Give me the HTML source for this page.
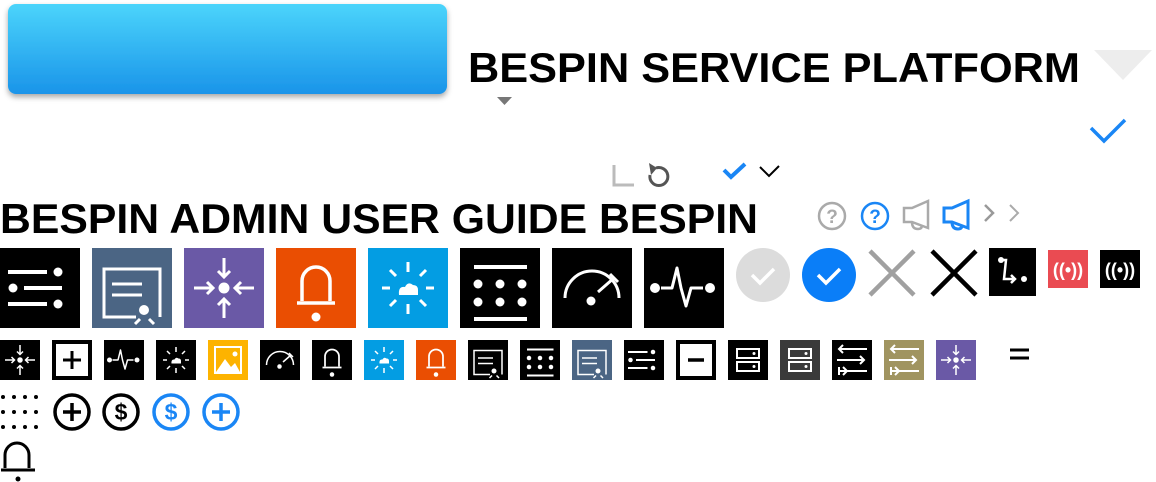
<!DOCTYPE html>
<html><head><meta charset="utf-8"><style>
html,body{margin:0;padding:0;background:#fff;width:1156px;height:482px;overflow:hidden}
svg{display:block}
text{font-family:"Liberation Sans",sans-serif;font-weight:bold}
</style></head><body>
<svg width="1156" height="482" viewBox="0 0 1156 482" xmlns="http://www.w3.org/2000/svg">
<defs>
<linearGradient id="bg" x1="0" y1="0" x2="0" y2="1"><stop offset="0" stop-color="#4bd4fb"/><stop offset="1" stop-color="#1a94e9"/></linearGradient>
<filter id="sh" x="-10%" y="-20%" width="120%" height="150%"><feDropShadow dx="0" dy="3" stdDeviation="3" flood-color="#000" flood-opacity="0.35"/></filter>
<symbol id="sliders" viewBox="0 0 80 80"><g stroke="#fff" stroke-width="4" fill="#fff"><line x1="8" y1="24" x2="47" y2="24"/><circle cx="58" cy="24" r="4.5" stroke="none"/><circle cx="13" cy="40" r="4.5" stroke="none"/><line x1="24" y1="40" x2="62" y2="40"/><line x1="8" y1="56" x2="47" y2="56"/><circle cx="58" cy="56" r="4.5" stroke="none"/></g></symbol>
<symbol id="pres" viewBox="0 0 80 80"><g stroke="#fff" stroke-width="3" fill="none"><path d="M44 69 H12 V21 H68 V69"/><line x1="20" y1="36" x2="50" y2="36"/><line x1="20" y1="47" x2="50" y2="47"/><line x1="48" y1="71" x2="43" y2="76"/><line x1="57" y1="71" x2="62" y2="76"/></g><circle cx="52" cy="62" r="5" fill="#fff"/></symbol>
<symbol id="arrin" viewBox="0 0 80 80"><g stroke="#fff" stroke-width="3" fill="none"><path d="M40 10 V29 M34 23 L40 29 L46 23"/><path d="M40 70 V51 M34 57 L40 51 L46 57"/><path d="M10 40 H29 M23 34 L29 40 L23 46"/><path d="M70 40 H51 M57 34 L51 40 L57 46"/></g><circle cx="40" cy="40" r="5.5" fill="#fff"/></symbol>
<symbol id="bell" viewBox="0 0 80 80"><g stroke="#fff" stroke-width="3.5" fill="none"><path d="M26 53 V33 A14 14 0 0 1 54 33 V53"/><line x1="21" y1="55" x2="59" y2="55"/></g><circle cx="40" cy="69" r="4.5" fill="#fff"/></symbol>
<symbol id="sun" viewBox="0 0 80 80"><g stroke="#fff" stroke-width="3" fill="none"><path d="M40 14 V24 M40 56 V66 M14 40 H22 M58 40 H66 M22 22 L28 28 M58 22 L52 28 M22 58 L28 52 M58 58 L52 52"/></g><path d="M31 47 Q30 38 37 39 Q40 33 45 37 Q50 37 50 42 V47 Z" fill="#fff"/></symbol>
<symbol id="grid" viewBox="0 0 80 80"><g fill="#fff"><rect x="14" y="17" width="53" height="4"/><rect x="14" y="69" width="53" height="4"/><circle cx="18" cy="36" r="4.5"/><circle cx="40" cy="36" r="4.5"/><circle cx="62" cy="36" r="4.5"/><circle cx="18" cy="54" r="4.5"/><circle cx="40" cy="54" r="4.5"/><circle cx="62" cy="54" r="4.5"/></g></symbol>
<symbol id="gauge" viewBox="0 0 80 80"><g stroke="#fff" stroke-width="3" fill="none"><path d="M13 50 A27 27 0 0 1 67 50"/><path d="M46 44 L62 30 M58 26 L66 34"/></g><circle cx="39" cy="53" r="4.5" fill="#fff"/></symbol>
<symbol id="pulse" viewBox="0 0 80 80"><g stroke="#fff" stroke-width="3" fill="none" stroke-linejoin="round"><path d="M17 40 H28 L33 20 L37 40 L42 58 L47 40 H59"/></g><circle cx="11" cy="40" r="5" fill="#fff"/><circle cx="66" cy="40" r="5" fill="#fff"/></symbol>
<symbol id="plus" viewBox="0 0 80 80"><rect x="8" y="8" width="64" height="64" fill="#fff"/><path d="M40 22 V58 M22 40 H58" stroke="#000" stroke-width="6"/></symbol>
<symbol id="minus" viewBox="0 0 80 80"><rect x="8" y="8" width="64" height="64" fill="#fff"/><path d="M24 40 H56" stroke="#000" stroke-width="7"/></symbol>
<symbol id="img" viewBox="0 0 80 80"><rect x="14" y="14" width="52" height="52" fill="none" stroke="#fff" stroke-width="4"/><path d="M16 64 L34 38 L46 54 L54 46 L64 64 Z" fill="#fff"/><circle cx="54" cy="28" r="5" fill="#fff"/></symbol>
<symbol id="server" viewBox="0 0 80 80"><g stroke="#fff" stroke-width="4" fill="none"><rect x="18" y="18" width="44" height="18"/><rect x="18" y="44" width="44" height="18"/></g><circle cx="52" cy="27" r="3" fill="#fff"/><circle cx="52" cy="53" r="3" fill="#fff"/></symbol>
<symbol id="xfer" viewBox="0 0 80 80"><g stroke="#fff" stroke-width="4" fill="none"><path d="M14 18 H70 M22 10 L14 18 L22 26"/><path d="M10 40 H64 M56 32 L64 40 L56 48"/><path d="M14 62 H70 M14 54 V70 M22 54 L30 62 L22 70"/></g></symbol>
</defs>

<rect x="8" y="4" width="439" height="90" rx="8" fill="url(#bg)" filter="url(#sh)"/>
<text x="468" y="82" font-size="41.5" textLength="612" lengthAdjust="spacingAndGlyphs" fill="#000">BESPIN SERVICE PLATFORM</text>
<path d="M1094 50 H1152 L1123 80 Z" fill="#ededed"/>
<path d="M497 97 H512 L504.5 105 Z" fill="#777"/>
<path d="M1091 128 L1104 141 L1125 120" stroke="#1a86f5" stroke-width="3.5" fill="none"/>

<path d="M614 165 V185 H634" stroke="#bbb" stroke-width="3" fill="none"/>
<path d="M656 168 A9 9 0 1 1 650 175" stroke="#555" stroke-width="3" fill="none"/><path d="M649 163 L657 168 L651 175Z" fill="#555"/>
<path d="M724 170 L731 177 L745 164" stroke="#1a86f5" stroke-width="4" fill="none"/>
<path d="M760 167 L769 176 L779 166" stroke="#000" stroke-width="2" fill="none"/>

<text x="0" y="233" font-size="41.5" textLength="758" lengthAdjust="spacingAndGlyphs" fill="#000">BESPIN ADMIN USER GUIDE BESPIN</text>
<circle cx="832" cy="216" r="13" fill="none" stroke="#aaa" stroke-width="2.5"/><text x="832" y="223" font-size="19" text-anchor="middle" fill="#aaa">?</text>
<circle cx="875" cy="216" r="13" fill="none" stroke="#1a86f5" stroke-width="2.5"/><text x="875" y="223" font-size="19" text-anchor="middle" fill="#1a86f5">?</text>
<path d="M904 208 H912 L928 201 V228 L912 222 H904 Z M912 222 Q912 229 918 229 Q922 229 922 225" fill="none" stroke="#aaa" stroke-width="2.5"/>
<path d="M944 208 H952 L968 201 V228 L952 222 H944 Z M952 222 Q952 229 958 229 Q962 229 962 225" fill="none" stroke="#1a86f5" stroke-width="3"/>
<path d="M985 205 L993 213 L985 221" stroke="#999" stroke-width="2.5" fill="none"/>
<path d="M1010 205 L1018 213 L1010 221" stroke="#aaa" stroke-width="2" fill="none"/>

<rect x="0" y="248" width="80" height="80" fill="#000"/><use href="#sliders" x="0" y="248" width="80" height="80"/>
<rect x="92" y="248" width="80" height="80" fill="#4b6584"/><use href="#pres" x="92" y="248" width="80" height="80"/>
<rect x="184" y="248" width="80" height="80" fill="#6a59a6"/><use href="#arrin" x="184" y="248" width="80" height="80"/>
<rect x="276" y="248" width="80" height="80" fill="#ea4e02"/><use href="#bell" x="276" y="248" width="80" height="80"/>
<rect x="368" y="248" width="80" height="80" fill="#039de3"/><use href="#sun" x="368" y="248" width="80" height="80"/>
<rect x="460" y="248" width="80" height="80" fill="#000"/><use href="#grid" x="460" y="248" width="80" height="80"/>
<rect x="552" y="248" width="80" height="80" fill="#000"/><use href="#gauge" x="552" y="248" width="80" height="80"/>
<rect x="644" y="248" width="80" height="80" fill="#000"/><use href="#pulse" x="644" y="248" width="80" height="80"/>
<circle cx="763" cy="275" r="27" fill="#dcdcdc"/><path d="M752 275 L760 283 L774 269" stroke="#fff" stroke-width="3.5" fill="none"/>
<circle cx="829" cy="275" r="27" fill="#0a7ef8"/><path d="M818 275 L826 283 L840 269" stroke="#fff" stroke-width="3.5" fill="none"/>
<path d="M870 251 L914 295 M914 251 L870 295" stroke="#a0a0a0" stroke-width="4.5"/>
<path d="M932 251 L976 295 M976 251 L932 295" stroke="#000" stroke-width="4.5"/>
<rect x="989" y="248" width="47" height="48" fill="#000"/><path d="M1000 260 H1006 L1004 279 H1014 M1011 275 L1015 279 L1011 283" stroke="#fff" stroke-width="2.5" fill="none"/><circle cx="1001" cy="260" r="3" fill="#fff"/><circle cx="1024" cy="279" r="3" fill="#fff"/>
<rect x="1048" y="250" width="40" height="38" fill="#ea4b52"/><text x="1068" y="276" font-size="18" text-anchor="middle" fill="#fff">((•))</text>
<rect x="1100" y="250" width="40" height="38" fill="#000"/><text x="1120" y="276" font-size="18" text-anchor="middle" fill="#fff">((•))</text>

<rect x="0" y="340" width="40" height="40" fill="#000"/><use href="#arrin" x="0" y="340" width="40" height="40"/>
<rect x="52" y="340" width="40" height="40" fill="#000"/><use href="#plus" x="52" y="340" width="40" height="40"/>
<rect x="104" y="340" width="40" height="40" fill="#000"/><use href="#pulse" x="104" y="340" width="40" height="40"/>
<rect x="156" y="340" width="40" height="40" fill="#000"/><use href="#sun" x="156" y="340" width="40" height="40"/>
<rect x="208" y="340" width="40" height="40" fill="#fdb300"/><use href="#img" x="208" y="340" width="40" height="40"/>
<rect x="260" y="340" width="40" height="40" fill="#000"/><use href="#gauge" x="260" y="340" width="40" height="40"/>
<rect x="312" y="340" width="40" height="40" fill="#000"/><use href="#bell" x="312" y="340" width="40" height="40"/>
<rect x="364" y="340" width="40" height="40" fill="#039de3"/><use href="#sun" x="364" y="340" width="40" height="40"/>
<rect x="416" y="340" width="40" height="40" fill="#ea4e02"/><use href="#bell" x="416" y="340" width="40" height="40"/>
<rect x="468" y="340" width="40" height="40" fill="#000"/><use href="#pres" x="468" y="340" width="40" height="40"/>
<rect x="520" y="340" width="40" height="40" fill="#000"/><use href="#grid" x="520" y="340" width="40" height="40"/>
<rect x="572" y="340" width="40" height="40" fill="#4b6584"/><use href="#pres" x="572" y="340" width="40" height="40"/>
<rect x="624" y="340" width="40" height="40" fill="#000"/><use href="#sliders" x="624" y="340" width="40" height="40"/>
<rect x="676" y="340" width="40" height="40" fill="#000"/><use href="#minus" x="676" y="340" width="40" height="40"/>
<rect x="728" y="340" width="40" height="40" fill="#000"/><use href="#server" x="728" y="340" width="40" height="40"/>
<rect x="780" y="340" width="40" height="40" fill="#3a3a3a"/><use href="#server" x="780" y="340" width="40" height="40"/>
<rect x="832" y="340" width="40" height="40" fill="#000"/><use href="#xfer" x="832" y="340" width="40" height="40"/>
<rect x="884" y="340" width="40" height="40" fill="#a09460"/><use href="#xfer" x="884" y="340" width="40" height="40"/>
<rect x="936" y="340" width="40" height="40" fill="#6a59a6"/><use href="#arrin" x="936" y="340" width="40" height="40"/>
<path d="M1010 350 H1029 M1010 358 H1029" stroke="#000" stroke-width="3"/>

<g fill="#000"><circle cx="3" cy="397" r="2"/><circle cx="14" cy="397" r="2"/><circle cx="25" cy="397" r="2"/><circle cx="36" cy="397" r="2"/><circle cx="3" cy="412" r="2"/><circle cx="14" cy="412" r="2"/><circle cx="25" cy="412" r="2"/><circle cx="36" cy="412" r="2"/><circle cx="3" cy="427" r="2"/><circle cx="14" cy="427" r="2"/><circle cx="25" cy="427" r="2"/><circle cx="36" cy="427" r="2"/></g>
<circle cx="72" cy="412" r="17" fill="none" stroke="#000" stroke-width="3.5"/><path d="M72 403 V421 M63 412 H81" stroke="#000" stroke-width="3.5"/>
<circle cx="121" cy="412" r="17" fill="none" stroke="#000" stroke-width="3.5"/><text x="121" y="420" font-size="23" text-anchor="middle" fill="#000">$</text>
<circle cx="171" cy="412" r="17" fill="none" stroke="#1a86f5" stroke-width="3.5"/><text x="171" y="420" font-size="23" text-anchor="middle" fill="#1a86f5">$</text>
<circle cx="221" cy="412" r="17" fill="none" stroke="#1a86f5" stroke-width="3.5"/><path d="M221 403 V421 M212 412 H230" stroke="#1a86f5" stroke-width="3.5"/>

<path d="M5 468 V455 A12 12 0 0 1 29 455 V468" fill="none" stroke="#000" stroke-width="3"/>
<path d="M1 470 H35" stroke="#000" stroke-width="3"/>
<circle cx="18" cy="479" r="2.5" fill="#000"/>
</svg>
</body></html>
